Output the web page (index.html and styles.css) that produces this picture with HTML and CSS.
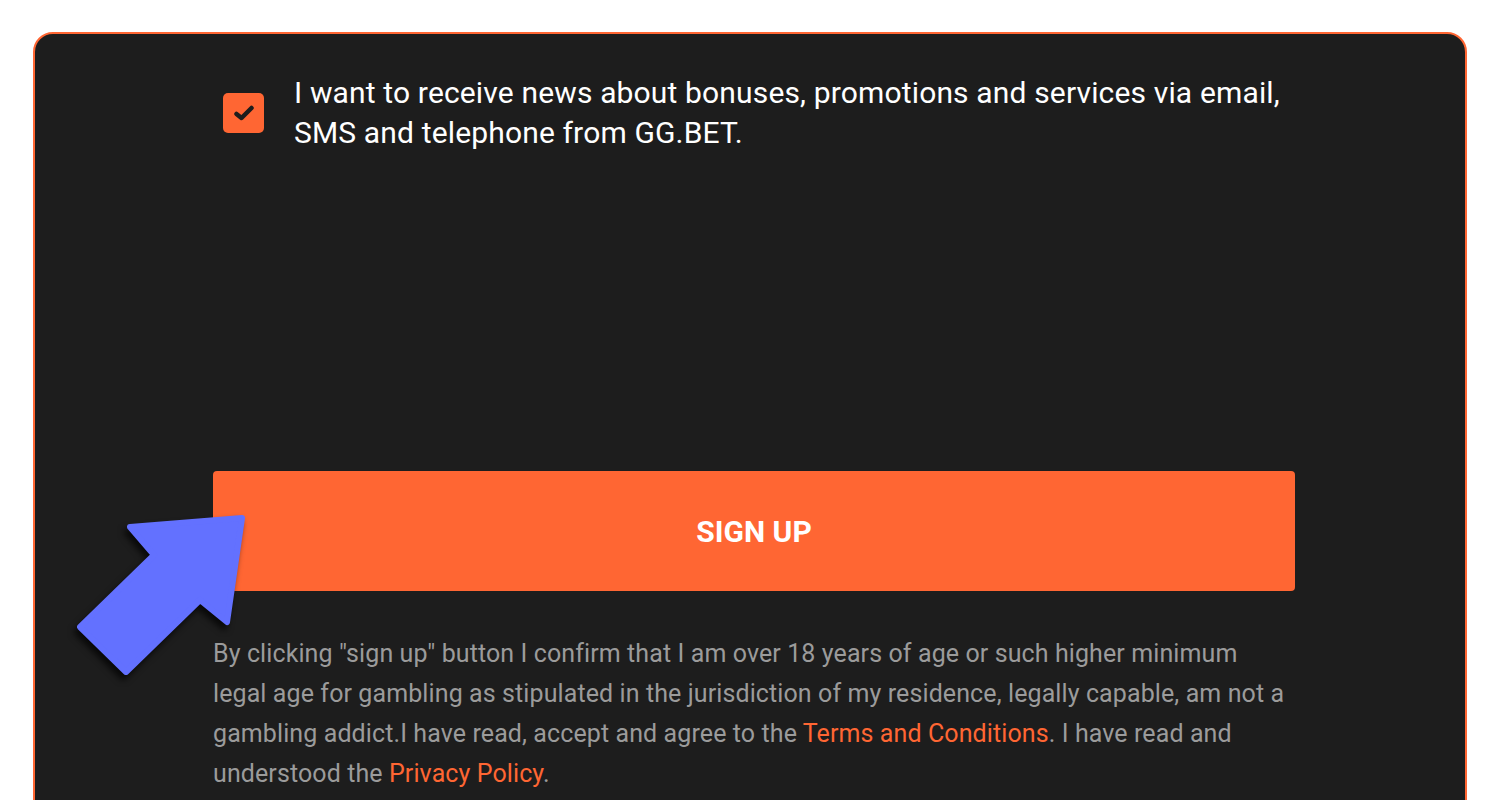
FILE: index.html
```html
<!DOCTYPE html>
<html>
<head>
<meta charset="utf-8">
<link rel="stylesheet" href="styles.css">
</head>
<body>
<div class="page">
  <div class="card">
    <div class="content">
      <div class="consent">
        <span class="checkbox">
          <svg width="20" height="16" viewBox="0 0 20 16"><path d="M2.5 9 L7.5 13 L17.5 3" fill="none" stroke="#1d1d1d" stroke-width="4.5" stroke-linecap="round" stroke-linejoin="round"/></svg>
        </span>
        <p class="consent-text">I want to receive news about bonuses, promotions and services via email, SMS and telephone from GG.BET.</p>
      </div>
      <button class="signup">SIGN UP</button>
      <p class="legal">By clicking "sign up" button I confirm that I am over 18 years of age or such higher minimum legal age for gambling as stipulated in the jurisdiction of my residence, legally capable, am not a gambling addict.I have read, accept and agree to the <a href="#">Terms and Conditions</a>. I have read and understood the <a href="#">Privacy Policy</a>.</p>
    </div>
  </div>
  <svg class="arrow" width="200" height="200" viewBox="0 0 200 200">
    <polygon points="170,18 58,27 82,55 8,127 54,172 128,100 155,122 170,18" fill="#6371ff" stroke="#6371ff" stroke-width="6" stroke-linejoin="round"/>
  </svg>
</div>
</body>
</html>
```

FILE: styles.css
```css
* { box-sizing: border-box; }
html, body { margin: 0; padding: 0; background: #ffffff; }
body { font-family: Roboto, "Liberation Sans", Arial, sans-serif; }
.page {
  position: relative;
  width: 1500px;
  height: 800px;
  overflow: hidden;
  padding: 32px 33px 0 33px;
}
.card {
  background: #1d1d1d;
  border: 2px solid #ff6633;
  border-radius: 20px;
  height: 820px;
  padding: 39px 0 0 178px;
}
.content { width: 1082px; }
.consent {
  display: flex;
  align-items: flex-start;
  padding-left: 10px;
}
.checkbox {
  flex: none;
  width: 41px;
  height: 40px;
  margin-top: 20px;
  margin-right: 30px;
  background: #ff6633;
  border-radius: 5px;
  display: flex;
  align-items: center;
  justify-content: center;
}
.consent-text {
  margin: 0;
  color: #ffffff;
  font-size: 30px;
  letter-spacing: 0.15px;
  line-height: 40px;
  width: 1000px;
}
.signup {
  display: block;
  width: 1082px;
  height: 120px;
  margin-top: 318px;
  border: none;
  border-radius: 4px;
  background: #ff6633;
  color: #ffffff;
  font-family: Roboto, "Liberation Sans", Arial, sans-serif;
  font-weight: 700;
  font-size: 30px;
  padding: 0;
}
.legal {
  margin: 43px 0 0 0;
  width: 1080px;
  color: #9b9b9b;
  font-size: 25px;
  letter-spacing: 0.1px;
  line-height: 40px;
}
.legal a { color: #ff6633; text-decoration: none; }
.arrow {
  position: absolute;
  left: 72px;
  top: 500px;
  filter: drop-shadow(-3px 5px 3px rgba(0,0,0,0.7));
}
```
